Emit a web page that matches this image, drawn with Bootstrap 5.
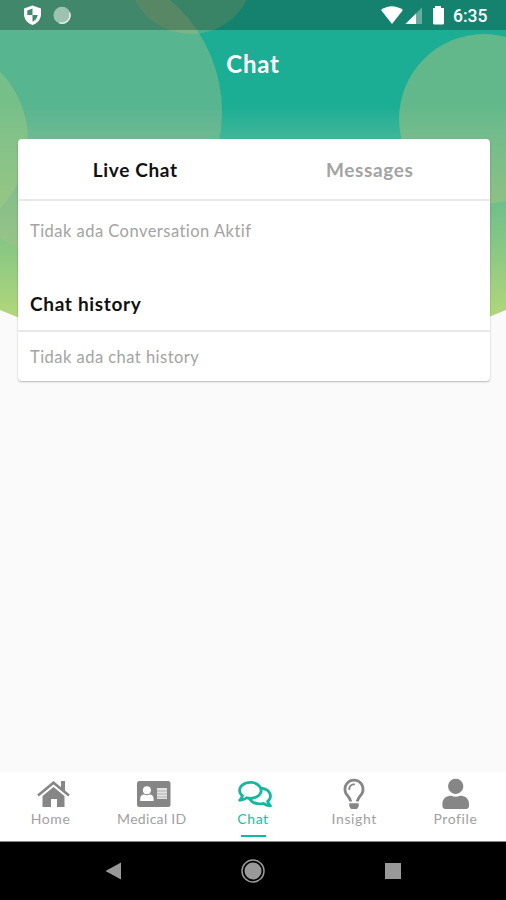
<!DOCTYPE html>
<html lang="id">
<head>
<meta charset="utf-8">
<meta name="viewport" content="width=device-width, initial-scale=1">
<title>Chat</title>
<link href="https://cdn.jsdelivr.net/npm/bootstrap@5.3.0/dist/css/bootstrap.min.css" rel="stylesheet">
<style>
body{font-family:Lato,"Open Sans",sans-serif;background:#fafafa;overflow:hidden;font-variant-ligatures:none}
.screen{height:900px}
.backdrop{z-index:0;pointer-events:none}
.layer{z-index:1}
.status{height:30px;background:rgba(0,0,0,.25);padding:0 18px 0 23px}
.clock{font:500 17.5px/30px Roboto,sans-serif;color:#fff;width:35px;margin-left:8px;padding-top:1px}
.title{height:109px;padding-top:20px;font-size:24px;line-height:28px;letter-spacing:.8px}
.panel{margin:0 16px 0 18px;height:242px;border-radius:4px;box-shadow:0 1px 2px rgba(0,0,0,.28)}
.tabs{height:62px;border-bottom:2px solid #e8e8e8;padding-right:3px}
.tabs button{font-size:19px;line-height:57px;letter-spacing:.65px}
.txt-dark{color:#111}
.txt-muted{color:#a3a3a3}
.note{font-size:16.5px;line-height:24px;letter-spacing:.47px}
.active-chats{height:85px;padding:18px 12px 0}
.history-head{height:46px;padding:4px 12px 0;font-size:19px;line-height:28px;letter-spacing:.68px;border-bottom:2px solid #e8e8e8}
.history-list{padding:13px 12px 0}
.tabbar{height:70px;border-bottom:1px solid #888}
.tabbar a{color:#a0a0a0;font-size:14px;line-height:18px;letter-spacing:.6px;padding-top:6px;flex:1}
.tabbar .tight{letter-spacing:.3px}
.tabbar svg{display:block;height:32px;fill:#868686}
.tabbar .nudge{margin-left:4px}
.tabbar a.current{color:#1abc9c}
.tabbar a.current svg{fill:#17b79f}
.marker{width:25px;height:2px;margin-top:7px;background:#17b79f}
.sysbar{height:58px;padding:0 104px}
</style>
<script src="https://cdn.jsdelivr.net/npm/bootstrap@5.3.0/dist/js/bootstrap.bundle.min.js"></script>
</head>
<body>
<div class="screen position-relative d-flex flex-column">
  <svg class="backdrop position-absolute top-0 start-0" width="506" height="350" viewBox="0 0 506 350" aria-hidden="true">
    <defs>
      <linearGradient id="base" gradientUnits="userSpaceOnUse" x1="0" y1="0" x2="0" y2="330">
        <stop offset="0" stop-color="#1bae95"/><stop offset=".32" stop-color="#1bae95"/>
        <stop offset=".41" stop-color="#3db598"/><stop offset=".62" stop-color="#70bf8a"/><stop offset="1" stop-color="#b9d978"/>
      </linearGradient>
      <clipPath id="hill"><path d="M0 0H506V310Q253 420 0 310Z"/></clipPath>
    </defs>
    <g clip-path="url(#hill)">
      <rect width="506" height="350" fill="url(#base)"/>
      <circle cx="75" cy="112" r="147" fill="#afc08a" fill-opacity=".41"/>
      <circle cx="-69" cy="140" r="97" fill="#a7d07c" fill-opacity=".4"/>
      <circle cx="191" cy="-29" r="63" fill="#b5b574" fill-opacity=".32"/>
      <circle cx="484" cy="119" r="85" fill="#a9c281" fill-opacity=".51"/>
    </g>
  </svg>

  <div class="layer status d-flex align-items-center">
    <svg width="50" height="30" viewBox="0 0 50 30">
      <path d="M9.500 5.500 18 8.500V14c0 5-3.200 9-8.500 11C4.200 23 1 19 1 14V8.500Z" fill="#fff"/>
      <path d="M9.500 8.500V15H4.300V10.500ZM9.500 15h5.200c-.4 3-2.200 5.200-5.200 6.700Z" fill="#3e8a6a"/>
      <circle cx="39" cy="15.300" r="8.500" fill="#9dc2b0"/>
      <path d="M46.500 12.500A8 8 0 0 1 36 22.600" fill="none" stroke="#e5f0ea" stroke-width="1.500"/>
    </svg>
    <svg class="ms-auto" width="64" height="30" viewBox="381 0 64 30">
      <path d="M381 10Q391.700 2.500 403 10L392 24Z" fill="#fff"/>
      <path d="M422 7.500V24H405.500Z" fill="#fff" fill-opacity=".35"/>
      <path d="M416 13.500V24H405.500Z" fill="#fff"/>
      <path d="M435 6h6v2h3v15q0 1.500-1.500 1.500h-8q-1.500 0-1.500-1.500V8h2Z" fill="#fff"/>
    </svg>
    <span class="clock">6:35</span>
  </div>

  <h1 class="layer title mb-0 fw-bold text-white text-center"><span>Chat</span></h1>

  <main class="layer panel bg-white">
    <div class="tabs d-flex">
      <button class="btn p-0 border-0 w-50 fw-bold txt-dark" type="button"><span>Live Chat</span></button>
      <button class="btn p-0 border-0 w-50 fw-bold txt-muted" type="button"><span>Messages</span></button>
    </div>
    <div class="active-chats note txt-muted"><span>Tidak ada Conversation Aktif</span></div>
    <h2 class="history-head mb-0 fw-bold txt-dark"><span>Chat history</span></h2>
    <div class="history-list note txt-muted"><span>Tidak ada chat history</span></div>
  </main>

  <nav class="layer tabbar mt-auto bg-white d-flex">
    <a class="d-flex flex-column align-items-center text-decoration-none" href="#">
      <svg class="nudge" width="34" viewBox="0 0 34 32"><path d="M2 17.500 17.500 4.800 33 17.500" fill="none" stroke="#868686" stroke-width="2.600"/><path d="M25 3H29V14L25 10.700ZM17.500 9 28.500 18V29H21V21H15V29H6.500V18Z"/></svg>
      <span>Home</span></a>
    <a class="d-flex flex-column align-items-center text-decoration-none" href="#">
      <svg class="nudge" width="34" viewBox="0 0 34 32"><rect x="0" y="3" width="33.500" height="26" rx="2.500"/><g fill="#fff"><circle cx="9.900" cy="12.300" r="4"/><path d="M3.200 23v-2q0-4.500 4-4.500 2.700 1.500 5.400 0 4 0 4 4.500v2Z"/><path d="M20 10h10v11h-10Z" opacity=".75"/></g><path d="M20 12.500h10v1H20Zm0 3h10v1H20Zm0 3h10v1H20Z" opacity=".5"/></svg>
      <span class="tight">Medical ID</span></a>
    <a class="current d-flex flex-column align-items-center text-decoration-none" href="#">
      <svg class="nudge" width="38" viewBox="-38 -20 650 547"><path d="M532 386.200c27.500-27.100 44-61.100 44-98.200 0-80-76.500-146.100-176.200-157.900C368.300 72.500 294.300 32 208 32 93.100 32 0 103.600 0 192c0 37 16.500 71 44 98.200-15.300 30.700-37.300 54.500-37.700 54.900-6.300 6.700-8.100 16.500-4.400 25 3.600 8.500 12 14 21.200 14 53.500 0 96.700-20.200 125.200-38.800 9.200 2.100 18.700 3.700 28.400 4.900C208.100 407.600 281.800 448 368 448c20.800 0 40.800-2.400 59.800-6.800C456.300 459.700 499.400 480 553 480c9.200 0 17.500-5.500 21.200-14 3.600-8.500 1.900-18.300-4.400-25-.4-.3-22.500-24.100-37.800-54.800zm-392.800-92.300L122.100 305c-14.100 9.100-28.500 16.300-43.100 21.400 2.700-4.700 5.400-9.700 8-14.800l15.500-31.100L77.700 256C64.200 242.600 48 220.700 48 192c0-60.700 73.300-112 160-112s160 51.300 160 112-73.300 112-160 112c-16.500 0-33-1.900-49-5.600l-19.800-4.500zM498.300 352l-24.700 24.400 15.500 31.100c2.600 5.100 5.300 10.100 8 14.800-14.600-5.100-29-12.300-43.100-21.400l-17.100-11.100-19.900 4.600c-16 3.700-32.500 5.600-49 5.600-54 0-102.200-20.100-131.300-49.700C338 339.500 416 272.900 416 192c0-3.400-.4-6.700-.7-10C479.700 196.500 528 238.800 528 288c0 28.700-16.200 50.600-29.700 64z"/></svg>
      <span>Chat</span><i class="marker"></i></a>
    <a class="d-flex flex-column align-items-center text-decoration-none" href="#">
      <svg width="22" viewBox="0 -12 352 540"><path d="M176 80c-52.940 0-96 43.060-96 96 0 8.840 7.160 16 16 16s16-7.160 16-16c0-35.300 28.720-64 64-64 8.840 0 16-7.160 16-16s-7.160-16-16-16zM96.060 459.170c0 3.150.93 6.220 2.680 8.840l24.510 36.840c2.970 4.460 7.970 7.140 13.320 7.140h78.850c5.360 0 10.360-2.680 13.320-7.140l24.510-36.840c1.740-2.620 2.670-5.700 2.680-8.840l.05-43.180H96.020l.04 43.180zM176 0C73.720 0 0 82.970 0 176c0 44.370 16.450 84.850 43.560 115.780 16.640 18.990 42.740 58.800 52.420 92.160v.06h48v-.12c-.01-4.770-.72-9.510-2.150-14.070-5.590-17.810-22.820-64.770-62.170-109.670-20.540-23.430-31.520-53.150-31.610-84.140-.2-73.640 59.670-128 127.950-128 70.580 0 128 57.420 128 128 0 30.970-11.240 60.850-31.650 84.140-39.110 44.610-56.420 91.470-62.100 109.460a47.507 47.507 0 0 0-2.220 14.300v.1h48v-.05c9.680-33.370 35.780-73.180 52.420-92.160C335.550 260.850 352 220.370 352 176 352 78.800 273.200 0 176 0z"/></svg>
      <span>Insight</span></a>
    <a class="d-flex flex-column align-items-center text-decoration-none" href="#">
      <svg width="28" viewBox="-12 -12 448 540"><path d="M224 256c70.700 0 128-57.300 128-128S294.700 0 224 0 96 57.300 96 128s57.300 128 128 128zm89.600 32h-16.700c-22.200 10.200-46.900 16-72.900 16s-50.600-5.800-72.900-16h-16.700C60.200 288 0 348.200 0 422.400V464c0 26.500 21.500 48 48 48h352c26.500 0 48-21.500 48-48v-41.600c0-74.200-60.200-134.400-134.400-134.400z"/></svg>
      <span>Profile</span></a>
  </nav>

  <div class="layer sysbar bg-black d-flex justify-content-between align-items-center">
    <svg width="18" height="20" viewBox="0 0 18 20"><path d="M1.500 10 17 1.500V18.500Z" fill="#999"/></svg>
    <svg width="26" height="26" viewBox="0 0 26 26"><circle cx="13" cy="13" r="11" fill="none" stroke="#999" stroke-width="1.500"/><circle cx="13" cy="13" r="8.500" fill="#999"/></svg>
    <svg width="18" height="18" viewBox="0 0 18 18"><rect x="1" y="1" width="16" height="16" fill="#999"/></svg>
  </div>
</div>
</body>
</html>
